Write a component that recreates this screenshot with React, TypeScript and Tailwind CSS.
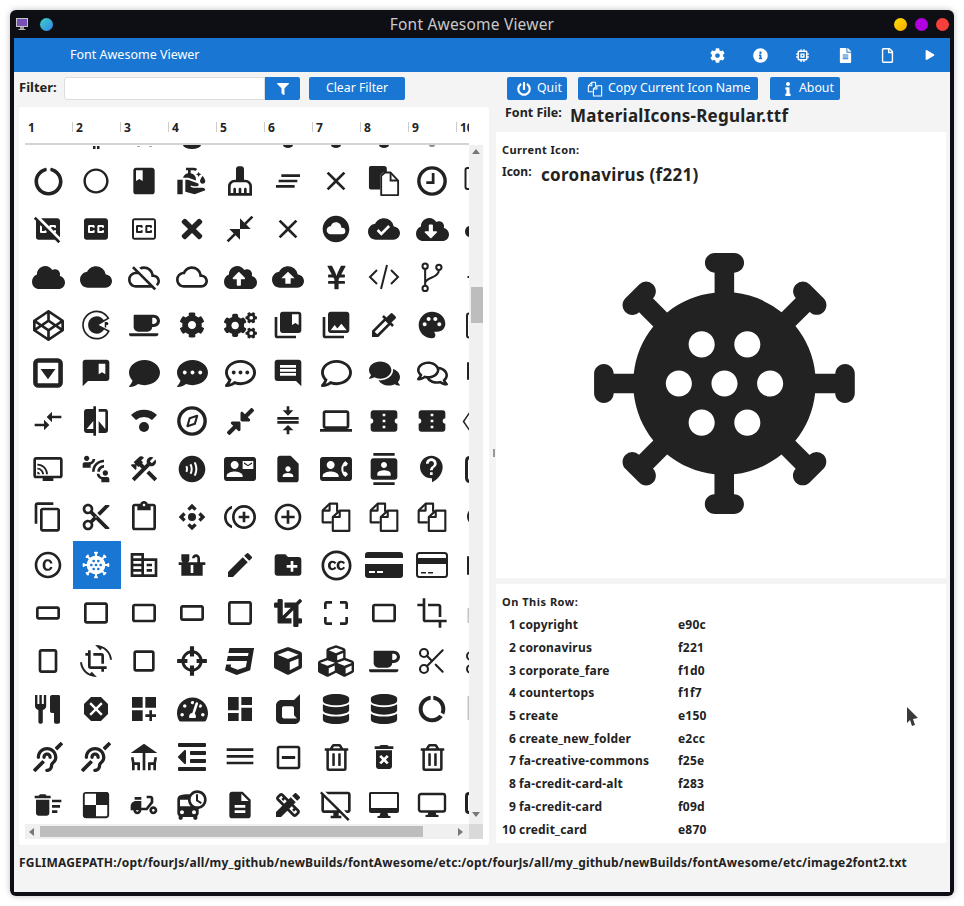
import React from 'react';
import {
  MdBook, MdCleanHands, MdCleaningServices, MdClearAll, MdClear, MdClosedCaptionDisabled, MdClosedCaption,
  MdClosedCaptionOff, MdCloseFullscreen, MdClose, MdCloudCircle, MdCloudDone, MdCloud, MdOutlineCloudOff,
  MdCloudQueue, MdCloudUpload, MdCollectionsBookmark, MdCollections, MdColorize, MdPalette, MdCommentBank, MdComment,
  MdCompareArrows, MdCompare, MdCompress, MdLaptop, MdConfirmationNumber, MdConnectedTv,
  MdConnectWithoutContact, MdConstruction, MdContactless, MdContactMail, MdContactPage, MdContactPhone, MdContacts,
  MdContactSupport, MdContentCopy, MdContentCut, MdContentPaste, MdControlCamera, MdControlPointDuplicate,
  MdControlPoint, MdCopyright, MdCoronavirus, MdCorporateFare, MdCountertops, MdCreate, MdCreateNewFolder,
  MdCrop169, MdCropDin, MdCrop32, MdCrop75, MdCropSquare, MdCropFree, MdCrop54, MdCrop, MdCropPortrait,
  MdCropRotate, MdDangerous, MdDashboardCustomize, MdDashboard, MdDataUsage, MdDeck, MdDehaze,
  MdDeleteForever, MdDeleteSweep, MdDeliveryDining, MdDepartureBoard, MdDescription, MdDesignServices,
  MdDesktopAccessDisabled, MdMemory,
} from 'react-icons/md';
import {
  FaCircleNotch, FaRegCircle, FaTimes, FaCloudDownloadAlt, FaCloud, FaCloudUploadAlt, FaYenSign, FaCodepen,
  FaCodiepie, FaCog, FaCogs, FaComment, FaCommentDots, FaRegCommentDots, FaRegComment,
  FaComments, FaRegComments, FaCompressAlt, FaCreativeCommons, FaCrop,
  FaCss3, FaCube, FaCubes, FaTachometerAlt, FaDashcube, FaDatabase, FaDeaf, FaOutdent, FaRegMinusSquare,
  FaRegTrashAlt, FaDelicious, FaFilter, FaPowerOff, FaInfo, FaInfoCircle, FaFileAlt, FaRegFile, FaPlay,
  FaCoffee,
} from 'react-icons/fa';
import { Scissors } from 'lucide-react';

type IconProps = { size?: number; className?: string };

const FilesO = ({ size = 34, className }: IconProps) => (
  <svg width={size} height={size} viewBox="0 0 30 30" fill="none" stroke="currentColor" strokeWidth="2" strokeLinejoin="round" className={className}>
    <path d="M11 20H2.500V9L9 2.500h7V10" />
    <path d="M2.500 9H9V2.500" />
    <path d="M12 28V15l6.500-6H27.500V28Z" />
    <path d="M12 15h6.500V9" />
  </svg>
);

const ClipFile = ({ size = 34, className }: IconProps) => (
  <svg width={size} height={size} viewBox="0 0 34 34" className={className}>
    <path d="M1 3a2 2 0 0 1 2-2h14a3 3 0 0 1 3 3v4h-4l-3 3v15H3a2 2 0 0 1-2-2Z" fill="currentColor" />
    <path d="M14 11.500 18 8h6l8 8.500V32H14Z" fill="#fff" stroke="currentColor" strokeWidth="2" strokeLinejoin="round" />
    <path d="M24 8v8.500h8" fill="none" stroke="currentColor" strokeWidth="2" />
  </svg>
);

const ThinCode = ({ size = 32, className }: IconProps) => (
  <svg width={size} height={size} viewBox="0 0 32 32" fill="none" stroke="currentColor" strokeWidth="2" className={className}>
    <path d="M9 9 2 16l7 7M23 9l7 7-7 7M19 4l-6 24" />
  </svg>
);

const WifiArc = ({ size = 32, className }: IconProps) => (
  <svg width={size} height={size} viewBox="0 0 32 32" className={className}>
    <path d="M3 10a19 19 0 0 1 26 0l-5 5a12 12 0 0 0-16 0Z" fill="currentColor" />
    <circle cx="16" cy="22" r="5" fill="currentColor" />
  </svg>
);

const Fork = ({ size = 28, className }: IconProps) => (
  <svg width={size} height={size} viewBox="0 0 28 28" fill="none" stroke="currentColor" strokeWidth="1.800" className={className}>
    <circle cx="8" cy="4.500" r="2.300" />
    <circle cx="20" cy="5.500" r="2.300" />
    <circle cx="8" cy="24" r="2.300" />
    <path d="M8 7v14.500M20 8c0 7-11 6-12 11" />
  </svg>
);

const ThickClock = ({ size = 28, className }: IconProps) => (
  <svg width={size} height={size} viewBox="0 0 28 28" fill="none" stroke="currentColor" strokeWidth="3" className={className}>
    <circle cx="14" cy="14" r="11.500" />
    <path d="M15 7v8.500H9" strokeWidth="2.400" />
  </svg>
);

const ThickCompass = ({ size = 28, className }: IconProps) => (
  <svg width={size} height={size} viewBox="0 0 28 28" fill="none" stroke="currentColor" strokeWidth="3" className={className}>
    <circle cx="14" cy="14" r="11.500" />
    <path d="M18.500 9.500 16.500 16.500 10 18.500 12 11.500Z" strokeWidth="1.800" strokeLinejoin="round" />
  </svg>
);

const CaretBox = ({ size = 28, className }: IconProps) => (
  <svg width={size} height={size} viewBox="0 0 28 28" className={className}>
    <rect x="3" y="3" width="22" height="22" rx="2.500" fill="none" stroke="currentColor" strokeWidth="4" />
    <path d="M7.500 10.500h13L14 19.500Z" fill="currentColor" />
  </svg>
);

const Crosshair = ({ size = 28, className }: IconProps) => (
  <svg width={size} height={size} viewBox="0 0 28 28" fill="none" stroke="currentColor" className={className}>
    <circle cx="14" cy="14" r="8" strokeWidth="2.600" />
    <path d="M14 1v9M14 18v9M1 14h9M18 14h9" strokeWidth="3.600" />
  </svg>
);

const Cutlery = ({ size = 32, className }: IconProps) => (
  <svg width={size} height={size} viewBox="0 0 32 32" className={className}>
    <path d="M3 2h2.400v9h2V2h2.400v9h2V2h2.400v11c0 2-1.500 3.500-3.400 4v12a1.800 1.800 0 0 1-1.800 1.800H8.200A1.800 1.800 0 0 1 6.400 29V17C4.500 16.500 3 15 3 13Z" fill="currentColor" />
    <path d="M18 4c0-1.200 1-2 2-2h6.500c1 0 1.500.7 1.500 1.500V29a1.800 1.800 0 0 1-1.800 1.800h-2.400A1.800 1.800 0 0 1 22 29V20h-2c-1.200 0-2-.8-2-2Z" fill="currentColor" />
  </svg>
);

const CardAlt = ({ className }: IconProps) => (
  <svg width="40" height="32" viewBox="0 0 40 32" className={className}>
    <path d="M4 3h32a3 3 0 0 1 3 3v3H1V6a3 3 0 0 1 3-3Z" fill="currentColor" />
    <path d="M1 15h38v11a3 3 0 0 1-3 3H4a3 3 0 0 1-3-3Z" fill="currentColor" />
    <rect x="5" y="22" width="6" height="2" fill="#fff" />
    <rect x="13" y="22" width="6" height="2" fill="#fff" />
  </svg>
);

const CardOutline = ({ className }: IconProps) => (
  <svg width="34" height="32" viewBox="0 0 34 32" className={className}>
    <rect x="2" y="4" width="30" height="24" rx="2.500" fill="none" stroke="currentColor" strokeWidth="2" />
    <rect x="2" y="9" width="30" height="6" fill="currentColor" />
    <rect x="6" y="23" width="5" height="1.500" fill="currentColor" />
    <rect x="13" y="23" width="5" height="1.500" fill="currentColor" />
  </svg>
);

const DesktopMac = ({ className }: IconProps) => (
  <svg width="32" height="32" viewBox="0 0 32 32" className={className}>
    <path d="M2.500 3h27A1.500 1.500 0 0 1 31 4.500V22a2 2 0 0 1-2 2H3a2 2 0 0 1-2-2V4.500A1.500 1.500 0 0 1 2.500 3Z" fill="currentColor" />
    <rect x="3" y="5" width="26" height="14" fill="#fff" />
    <path d="M12.500 24h7l1 3h2v2h-13v-2h2Z" fill="currentColor" />
  </svg>
);

const DesktopFrame = ({ className }: IconProps) => (
  <svg width="30" height="32" viewBox="0 0 30 32" className={className}>
    <rect x="2" y="5" width="26" height="17.500" rx="2" fill="none" stroke="currentColor" strokeWidth="2.400" />
    <path d="M11.500 23h7l1 3h2v2h-13v-2h2Z" fill="currentColor" />
  </svg>
);

const ThinScissors = ({ size = 30, className }: IconProps) => <Scissors size={size} strokeWidth={1.6} className={className} />;

// stub glyphs: only their lower edge is visible under the table header
const Feet = ({ className }: IconProps) => (
  <svg width="32" height="32" viewBox="0 0 32 32" className={className}>
    <rect x="13" y="29" width="2.500" height="3" fill="currentColor" />
    <rect x="17" y="29" width="2.500" height="3" fill="currentColor" />
  </svg>
);
const Marks = ({ className }: IconProps) => (
  <svg width="32" height="32" viewBox="0 0 32 32" className={className}>
    <rect x="9" y="29" width="3" height="1" fill="currentColor" opacity="0.4" />
    <rect x="21" y="29" width="3" height="1" fill="currentColor" opacity="0.4" />
  </svg>
);
const Blob = ({ className }: IconProps) => (
  <svg width="32" height="32" viewBox="0 0 32 32" className={className}>
    <ellipse cx="16" cy="28" rx="9" ry="4" fill="currentColor" />
  </svg>
);
const Arc = ({ className }: IconProps) => (
  <svg width="32" height="32" viewBox="0 0 32 32" className={className}>
    <ellipse cx="16" cy="28" rx="5" ry="3" fill="currentColor" />
  </svg>
);
const ArcFaint = ({ className }: IconProps) => (
  <svg width="32" height="32" viewBox="0 0 32 32" className={className} opacity="0.5">
    <ellipse cx="16" cy="28" rx="3" ry="2" fill="currentColor" />
  </svg>
);

// the tenth column is clipped by the viewport, so only its left sliver shows
const edge = (content: React.ReactNode) => ({ className }: IconProps) => (
  <svg width="48" height="48" viewBox="0 0 48 48" className={`shrink-0 ${className ?? ''}`} fill="none" stroke="currentColor">
    {content}
  </svg>
);
const EdgeBracket = edge(<path d="M14 11h-2.500a2 2 0 0 0-2 2v17a2 2 0 0 0 2 2H14" strokeWidth="2" />);
const EdgeHalf = edge(<ellipse cx="14" cy="26.500" rx="5" ry="5.500" fill="currentColor" stroke="none" />);
const EdgeSpeck = edge(<rect x="11.500" y="23" width="2" height="2" fill="currentColor" stroke="none" />);
const EdgeBracketTall = edge(<path d="M14 12.500h-1a2 2 0 0 0-2 2v20a2 2 0 0 0 2 2h1" strokeWidth="2" />);
const EdgeLine = edge(<rect x="11" y="13" width="2" height="18" rx="1" fill="currentColor" stroke="none" />);
const EdgeChevron = edge(<path d="M14 15 7.500 24.500 14 34" strokeWidth="1.500" />);
const EdgeTooth = edge(<path d="M14 12.500c-2 0-3.500 1.500-3.500 4v16c0 2.500 1.500 4 3.500 4" strokeWidth="3" />);
const EdgeNarrow = edge(<ellipse cx="15" cy="23.500" rx="4" ry="6.500" fill="currentColor" stroke="none" />);
const EdgeLineLong = edge(<rect x="11" y="15" width="2" height="19" rx="1" fill="currentColor" stroke="none" />);
const EdgeFaint = edge(<rect x="11.500" y="19" width="1.500" height="15" fill="#c4c4c4" stroke="none" />);
const EdgeRings = edge(
  <>
    <circle cx="15" cy="19" r="4" strokeWidth="2" />
    <circle cx="15" cy="32" r="4" strokeWidth="2" />
  </>
);
const EdgeFaintLong = edge(<rect x="11.500" y="11" width="1.500" height="24" fill="#c4c4c4" stroke="none" />);
const EdgeThick = edge(<path d="M14 12.500h-1c-1.500 0-2.500 1-2.500 2.500v14c0 1.500 1 2.500 2.500 2.500h1" strokeWidth="3" />);

type Cell = [React.ComponentType<IconProps>, number?];

const F = 26;
const rows: Cell[][] = [
  [[MdClear, 0], [Feet], [Marks], [Blob], [MdClear, 0], [Arc], [Arc], [Arc], [ArcFaint], [MdClear, 0]],
  [[FaCircleNotch, 29], [FaRegCircle, F], [MdBook], [MdCleanHands], [MdCleaningServices], [MdClearAll], [MdClear], [ClipFile], [ThickClock], [EdgeBracket]],
  [[MdClosedCaptionDisabled], [MdClosedCaption], [MdClosedCaptionOff], [FaTimes, 30], [MdCloseFullscreen], [MdClose], [MdCloudCircle], [MdCloudDone], [FaCloudDownloadAlt, 33], [EdgeHalf]],
  [[FaCloud, 33], [MdCloud], [MdOutlineCloudOff], [MdCloudQueue], [FaCloudUploadAlt, 33], [MdCloudUpload], [FaYenSign, 27], [ThinCode], [Fork], [EdgeSpeck]],
  [[FaCodepen, 31], [FaCodiepie, 30], [FaCoffee, 31], [FaCog, F], [FaCogs, 33], [MdCollectionsBookmark], [MdCollections], [MdColorize], [MdPalette], [EdgeBracketTall]],
  [[CaretBox], [MdCommentBank], [FaComment, 31], [FaCommentDots, 31], [FaRegCommentDots, 31], [MdComment], [FaRegComment, 31], [FaComments, 31], [FaRegComments, 31], [EdgeLine]],
  [[MdCompareArrows], [MdCompare], [WifiArc], [ThickCompass], [FaCompressAlt, 31], [MdCompress], [MdLaptop], [MdConfirmationNumber], [MdConfirmationNumber], [EdgeChevron]],
  [[MdConnectedTv], [MdConnectWithoutContact], [MdConstruction], [MdContactless], [MdContactMail], [MdContactPage], [MdContactPhone], [MdContacts], [MdContactSupport], [EdgeTooth]],
  [[MdContentCopy], [MdContentCut], [MdContentPaste], [MdControlCamera], [MdControlPointDuplicate], [MdControlPoint], [FilesO], [FilesO], [FilesO], [EdgeNarrow]],
  [[MdCopyright], [MdCoronavirus], [MdCorporateFare], [MdCountertops], [MdCreate], [MdCreateNewFolder], [FaCreativeCommons, 31], [CardAlt], [CardOutline], [EdgeLineLong]],
  [[MdCrop169], [MdCrop54], [MdCrop75], [MdCrop32], [MdCropDin], [FaCrop, 28], [MdCropFree], [MdCrop75], [MdCrop], [EdgeFaint]],
  [[MdCropPortrait], [MdCropRotate], [MdCropSquare], [Crosshair], [FaCss3, 31], [FaCube, 28], [FaCubes, 36], [FaCoffee, 31], [ThinScissors], [EdgeRings]],
  [[Cutlery], [MdDangerous], [MdDashboardCustomize], [FaTachometerAlt, 31], [MdDashboard], [FaDashcube, 30], [FaDatabase, 30], [FaDatabase, 30], [MdDataUsage], [EdgeFaintLong]],
  [[FaDeaf, 30], [FaDeaf, 30], [MdDeck], [FaOutdent, 32], [MdDehaze], [FaRegMinusSquare, 27], [FaRegTrashAlt, 27], [MdDeleteForever], [FaRegTrashAlt, 27], [MdClear, 0]],
  [[MdDeleteSweep], [FaDelicious, 30], [MdDeliveryDining], [MdDepartureBoard], [MdDescription], [MdDesignServices], [MdDesktopAccessDisabled], [DesktopMac], [DesktopFrame], [EdgeThick]],
];

const rowItems = [
  ['1', 'copyright', 'e90c'],
  ['2', 'coronavirus', 'f221'],
  ['3', 'corporate_fare', 'f1d0'],
  ['4', 'countertops', 'f1f7'],
  ['5', 'create', 'e150'],
  ['6', 'create_new_folder', 'e2cc'],
  ['7', 'fa-creative-commons', 'f25e'],
  ['8', 'fa-credit-card-alt', 'f283'],
  ['9', 'fa-credit-card', 'f09d'],
  ['10', 'credit_card', 'e870'],
];

const toolIcons = [
  <FaCog size={15} />,
  <FaInfoCircle size={15} />,
  <MdMemory size={17} />,
  <FaFileAlt size={15} />,
  <FaRegFile size={15} />,
  <FaPlay size={10} />,
];

function Btn({ w, children }: { w: string; children: React.ReactNode }) {
  return (
    <div className={`${w} h-[23px] bg-[#1976d2] text-white text-[12.300px] rounded-[2px] flex items-center shrink-0`}>
      {children}
    </div>
  );
}

function Arrow({ dir }: { dir: 'up' | 'down' | 'left' | 'right' }) {
  const pts = { up: '0,5 4,0 8,5', down: '0,0 8,0 4,5', left: '5,0 5,8 0,4', right: '0,0 0,8 5,4' }[dir];
  return (
    <svg width="8" height="8" viewBox="0 0 8 8" className="text-[#777]">
      <polygon points={pts} fill="currentColor" />
    </svg>
  );
}

export default function App() {
  return (
    <div className="w-[964px] h-[906px] bg-white p-[10px] font-['Noto_Sans',sans-serif] text-[#222]">
      <div className="w-[944px] h-[886px] bg-[#0e0f14] rounded-[6px] flex flex-col px-[4px] pb-[4px] shadow-[0_0_6px_rgba(0,0,0,0.25)]">
        {/* title bar */}
        <div className="h-[28px] flex items-center shrink-0 relative">
          <svg width="14" height="14" viewBox="0 0 14 14" className="ml-[1px]">
            <rect x="1" y="1" width="12" height="9" fill="#c5c5cc" />
            <rect x="2" y="2" width="10" height="7" fill="#7a4fb5" />
            <rect x="5" y="10" width="4" height="2" fill="#999" />
            <rect x="3.500" y="12" width="7" height="1" fill="#bbb" />
          </svg>
          <div className="ml-[11px] w-[13px] h-[13px] rounded-full bg-gradient-to-br from-[#3fd0c0] to-[#3b82e8]" />
          <div className="flex-1 text-center text-[15.500px] tracking-[0.2px] text-[#c9c9c9] pr-[3px] pt-[2px]">Font Awesome Viewer</div>
          <div className="flex gap-[8px] pr-[1px]">
            <div className="w-[13px] h-[13px] rounded-full bg-gradient-to-br from-[#ffe000] to-[#f5a800]" />
            <div className="w-[13px] h-[13px] rounded-full bg-[#b000e0]" />
            <div className="w-[13px] h-[13px] rounded-full bg-[#f5403c]" />
          </div>
        </div>

        <div className="flex-1 bg-[#f4f4f4] flex flex-col min-h-0">
          {/* toolbar */}
          <div className="h-[34px] bg-[#1976d2] flex items-center text-white shrink-0">
            <div className="ml-[56px] text-[12.500px]">Font Awesome Viewer</div>
            <div className="ml-auto flex mr-[-1px]">
              {toolIcons.map((icon, i) => (
                <div key={i} className="w-[42.400px] flex justify-center items-center">{icon}</div>
              ))}
            </div>
          </div>

          <div className="flex flex-1 min-h-0">
            {/* left pane */}
            <div className="w-[482px] shrink-0 pl-[5px] pt-[5px] flex flex-col">
              <div className="flex items-center h-[23px]">
                <div className="w-[45px] text-[13px] font-bold pb-[2px]">Filter:</div>
                <div className="w-[201px] h-[23px] bg-white border border-[#ddd] rounded-l-[3px]" />
                <div className="w-[35px] h-[23px] bg-[#1976d2] rounded-r-[2px] text-white flex items-center justify-center">
                  <FaFilter size={12} />
                </div>
                <div className="ml-[9px]">
                  <Btn w="w-[96px] justify-center">Clear Filter</Btn>
                </div>
              </div>

              <div className="mt-[7px] w-[470px] h-[738px] bg-white rounded-[3px] pl-[5px] pr-[6px] flex flex-col overflow-hidden">
                <div className="h-[38px] w-[444px] ml-[1px] border-b-2 border-[#d4d4d4] overflow-hidden flex shrink-0">
                  {Array.from({ length: 10 }, (_, i) => (
                    <div key={i} className="w-[48px] shrink-0 mt-[15px] h-[10px] flex items-center pl-[3px] text-[12px] font-bold relative">
                      <span className="relative top-[1px]">{i + 1}</span>
                      {i < 9 && <span className="absolute right-0 top-0 h-[10px] w-px bg-[#ccc]" />}
                    </div>
                  ))}
                </div>

                <div className="flex h-[679px] shrink-0">
                  <div className="w-[445px] overflow-hidden pl-[1px]">
                    <div className="mt-[-36px]">
                      {rows.map((row, r) => (
                        <div key={r} className="flex h-[48px]">
                          {row.map(([Icon, size], c) => {
                            const selected = r === 9 && c === 1;
                            return (
                              <div key={c} className={`w-[48px] h-[48px] shrink-0 flex items-center justify-center pr-[2px] ${selected ? 'bg-[#1976d2] text-white' : 'text-[#222]'}`}>
                                {size !== 0 && <Icon size={size ?? 32} />}
                              </div>
                            );
                          })}
                        </div>
                      ))}
                    </div>
                  </div>
                  <div className="w-[14px] bg-[#f0f0f0] flex flex-col items-center relative">
                    <div className="mt-[4px]"><Arrow dir="up" /></div>
                    <div className="mt-[130px] w-[12px] h-[36px] bg-[#bdbdbd] ml-[2px]" />
                    <div className="mt-auto mb-[4px]"><Arrow dir="down" /></div>
                  </div>
                </div>

                <div className="flex h-[15px] shrink-0 ml-[1px]">
                  <div className="w-[444px] bg-[#f0f0f0] flex items-center">
                    <div className="w-[15px] flex justify-center"><Arrow dir="left" /></div>
                    <div className="w-[383px] h-[11px] bg-[#bdbdbd]" />
                    <div className="ml-auto w-[15px] flex justify-center"><Arrow dir="right" /></div>
                  </div>
                  <div className="w-[14px] bg-[#d9d9d9]" />
                </div>
              </div>
            </div>

            {/* right pane */}
            <div className="flex-1 flex flex-col pt-[5px] min-w-0 relative">
              <div className="absolute left-[-3px] top-[377px] w-[2px] h-[8px] bg-[#999]" />
              <div className="flex h-[23px] pl-[11px]">
                <Btn w="w-[60px] pl-[10px]"><FaPowerOff size={14} className="mr-[6px]" />Quit</Btn>
                <div className="ml-[11px]">
                  <Btn w="w-[180px] pl-[9px]"><FilesO size={16} className="mr-[5px]" />Copy Current Icon Name</Btn>
                </div>
                <div className="ml-[12px]">
                  <Btn w="w-[70px] pl-[11px]"><FaInfo size={14} className="mr-[4px]" />About</Btn>
                </div>
              </div>
              <div className="h-[32px] flex ml-[9px]">
                <div className="w-[65px] text-[12.500px] font-bold pt-[4px]">Font File:</div>
                <div className="text-[17px] tracking-[0.25px] font-bold leading-[20px] pt-[6px]">MaterialIcons-Regular.ttf</div>
              </div>

              <div className="w-[450px] h-[446px] bg-white flex flex-col shrink-0">
                <div className="pl-[6px] pt-[10px] text-[11px] tracking-[0.4px] font-bold leading-[15px]">Current Icon:</div>
                <div className="flex pl-[6px] mt-[6px] h-[22px]">
                  <div className="w-[39px] text-[12px] font-bold leading-[18px]">Icon:</div>
                  <div className="text-[17px] tracking-[0.3px] font-bold leading-[22px] pt-[1px]">coronavirus (f221)</div>
                </div>
                <div className="flex-1 flex items-center justify-center pt-[4px] pl-[6px] min-h-0">
                  <MdCoronavirus size={313} className="text-[#222] shrink-0" />
                </div>
              </div>

              <div className="w-[450px] h-[259px] mt-[6px] bg-white pl-[6px] pt-[10px] relative">
                <div className="text-[11px] tracking-[0.5px] font-bold leading-[15px]">On This Row:</div>
                <div className="mt-[5px]">
                  {rowItems.map(([n, name, code]) => (
                    <div key={n} className="flex h-[22.700px] items-center text-[12px] tracking-[0.2px] font-bold">
                      <div className="w-[14px] text-right shrink-0">{n}</div>
                      <div className="w-[162px] pl-[3px] shrink-0">{name}</div>
                      <div>{code}</div>
                    </div>
                  ))}
                </div>
                <svg width="12" height="20" viewBox="0 0 12 20" className="absolute left-[411px] top-[123px]">
                  <path d="M0 0 11 11 6 12 8 18 5 19 3 13 0 16Z" fill="#3a3a3a" />
                </svg>
              </div>
            </div>
          </div>

          <div className="h-[47px] shrink-0 pl-[5px] pt-[9px] text-[12px] tracking-[0.19px] font-bold leading-[18px]">
            FGLIMAGEPATH:/opt/fourJs/all/my_github/newBuilds/fontAwesome/etc:/opt/fourJs/all/my_github/newBuilds/fontAwesome/etc/image2font2.txt
          </div>
        </div>
      </div>
    </div>
  );
}
